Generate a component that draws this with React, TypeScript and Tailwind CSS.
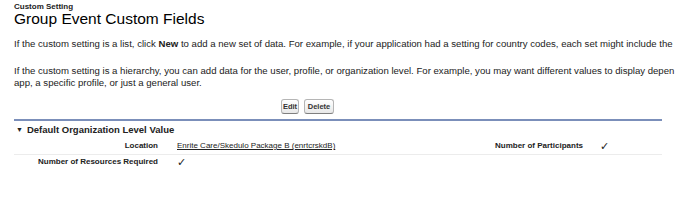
const btn =
  "h-[15px] flex items-center justify-center rounded-[3px] border border-[#b5b5b5] border-b-[#7f7f7f] bg-gradient-to-b from-white to-[#e8e8e8] text-[7.5px] font-bold text-[#333] leading-none";

export default function App() {
  return (
    <div className="w-[700px] h-[203px] overflow-hidden bg-white text-[#222] font-['Liberation_Sans',Arial,sans-serif]">
      <div className="w-[760px] pl-[14px]">
        <div className="pt-[3px]">
          <div className="text-[8px] font-bold leading-[8px] text-[#222]">Custom Setting</div>
          <h1 className="text-[15.5px] leading-[16px] text-black">Group Event Custom Fields</h1>
        </div>
        <p className="mt-[11px] text-[9.6px] leading-[12px] whitespace-nowrap">
          If the custom setting is a list, click <b>New</b> to add a new set of data. For example, if your application had a setting for country codes, each set might include the
        </p>
        <p className="mt-[15px] text-[9.6px] leading-[12px] whitespace-nowrap">
          If the custom setting is a hierarchy, you can add data for the user, profile, or organization level. For example, you may want different values to display depen
          <br />
          app, a specific profile, or just a general user.
        </p>

        <div className="w-[648px] mt-[10px]">
          <div className="flex gap-[5px] pl-[267px]">
            <button className={btn + " w-[18px]"}>Edit</button>
            <button className={btn + " w-[30px]"}>Delete</button>
          </div>
          <div className="mt-[5px] border-t-2 border-[#7b8fba]" />
          <div className="pt-[3px] pl-[2px] text-[9.5px] font-bold text-[#222] leading-[12px]">
            <span className="text-[7px] mr-[4px] align-[1px]">▼</span>Default Organization Level Value
          </div>
          <div className="grid grid-cols-[163px_250px_173px_1fr] text-[8px] leading-[10px] border-b border-[#ececec] pt-[5px] pb-[3px]">
            <div className="text-right font-bold pr-[19px]">Location</div>
            <div className="underline">Enrite Care/Skedulo Package B (enrtcrskdB)</div>
            <div className="text-right font-bold pr-[17px]">Number of Participants</div>
            <div className="text-[11px] leading-[10px]">✓</div>
          </div>
          <div className="grid grid-cols-[163px_250px_173px_1fr] text-[8px] leading-[10px] pt-[2px]">
            <div className="text-right font-bold pr-[19px] whitespace-nowrap">Number of Resources Required</div>
            <div className="text-[11px] leading-[10px]">✓</div>
            <div />
            <div />
          </div>
        </div>
      </div>
    </div>
  );
}
